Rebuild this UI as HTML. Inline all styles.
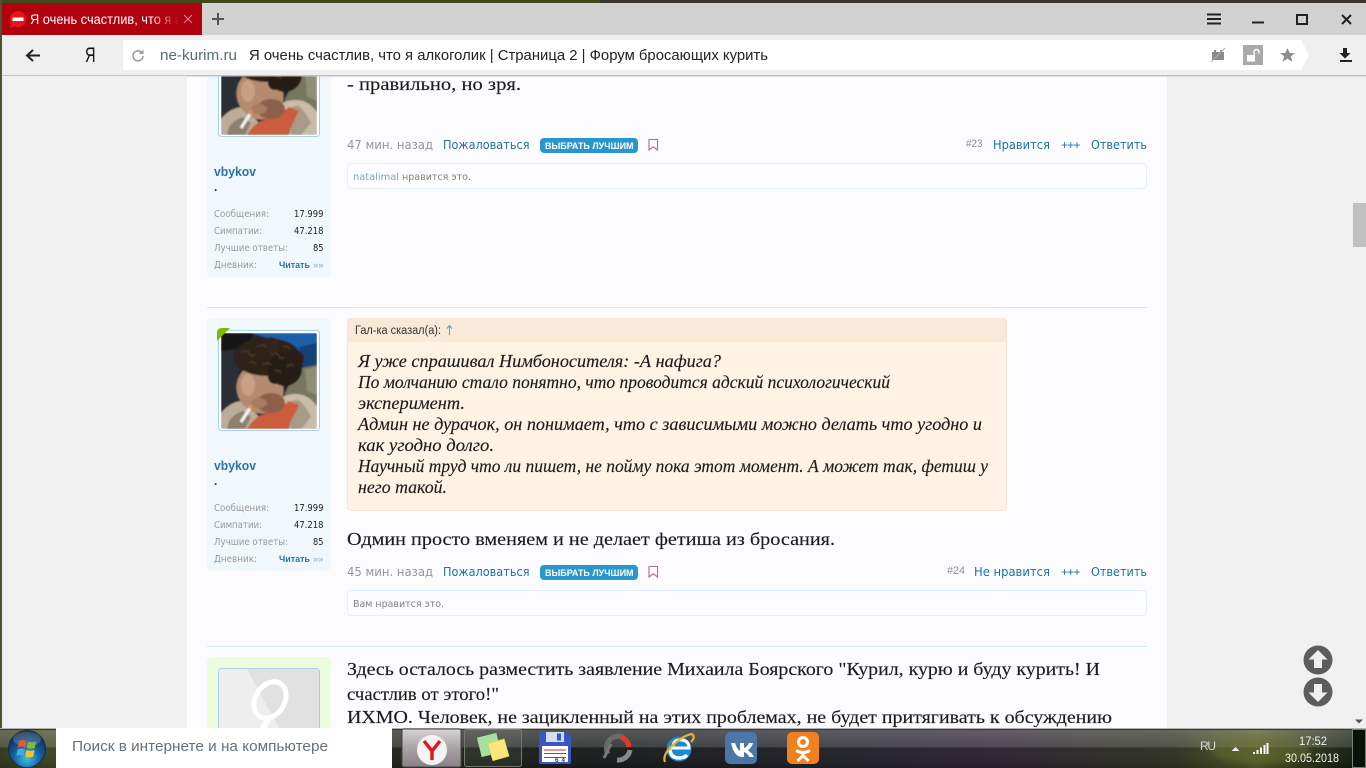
<!DOCTYPE html>
<html lang="ru"><head><meta charset="utf-8"><title>Я очень счастлив, что я алкоголик</title>
<style>
html,body{margin:0;padding:0;width:1366px;height:768px;overflow:hidden;background:#f0f0f0}
svg{display:block}
text{font-family:"Liberation Sans",sans-serif;white-space:pre}
.s{font-family:"Liberation Serif","DejaVu Serif",serif;font-size:18px;fill:#1c1c1c;stroke:#1c1c1c;stroke-width:.15px}
.q{font-style:italic;font-size:18px}
.m,.l,.t,.v,.n{font-family:"DejaVu Sans",sans-serif}
.m{font-size:12px;fill:#959595}
.l{font-size:12px;fill:#1f6ea6}
.t{font-size:9.500px;fill:#9a9a9a}
.v{font-size:9.500px;fill:#222}
.n{font-size:10px;fill:#808080}
</style></head><body>
<svg xmlns="http://www.w3.org/2000/svg" width="1366" height="768" viewBox="0 0 1366 768">
<defs>
<filter id="b" x="-10%" y="-10%" width="120%" height="120%"><feGaussianBlur stdDeviation="0.9"/></filter>
<filter id="b2" x="-20%" y="-20%" width="140%" height="140%"><feGaussianBlur stdDeviation="3"/></filter>
<clipPath id="ac"><rect width="96" height="96" rx="1"/></clipPath>
<symbol id="ava" width="96" height="96" viewBox="0 0 96 96" overflow="hidden">
<g clip-path="url(#ac)"><g filter="url(#b)">
<rect width="96" height="96" fill="#20262e"/>
<polygon points="0,0 32,0 28,16 0,18" fill="#121212"/>
<polygon points="30,0 96,0 96,36 76,22 50,6" fill="#1c60aa"/>
<polygon points="78,14 96,10 96,36 82,34" fill="#143f78"/>
<polygon points="0,18 16,16 18,46 26,66 0,78" fill="#2a2f36"/>
<polygon points="76,36 96,32 96,96 60,96 64,60" fill="#77775f"/>
<polygon points="84,36 96,34 96,62 86,58" fill="#8f8e76"/>
<path d="M0 80q10-12 22-12 8 6 16 16l-10 12H0z" fill="#bbad98"/>
<path d="M52 70q14-12 30-8 10 4 14 12v22H68l4-18z" fill="#c9bca8"/>
<path d="M66 72q6-6 12-5 8 8 12 17l-10 12H70z" fill="#a89a86"/>
<path d="M8 88q6-8 14-10l8 6-6 12H6z" fill="#8d806d"/>
<path d="M26 96q6-10 14-14 16-4 28-14l10 4-12 24z" fill="#cb5c3d"/>
<ellipse cx="39" cy="56" rx="23" ry="25" transform="rotate(-28 39 56)" fill="#b58a6e"/>
<ellipse cx="50" cy="70" rx="14" ry="10" fill="#8d614c"/>
<ellipse cx="27" cy="52" rx="7" ry="11" fill="#c9a084"/>
<ellipse cx="38" cy="70" rx="8" ry="5" fill="#a87a60"/>
<ellipse cx="46" cy="24" rx="34" ry="19" fill="#2d2119"/>
<circle cx="64" cy="36" r="17" fill="#281c15"/>
<circle cx="22" cy="24" r="10" fill="#31231a"/>
<circle cx="74" cy="26" r="9" fill="#2a1e17"/>
<circle cx="50" cy="12" r="8" fill="#33251c"/>
<circle cx="34" cy="12" r="7" fill="#2d2119"/>
<circle cx="38" cy="34" r="7" fill="#2d2119"/>
<circle cx="54" cy="44" r="7" fill="#281c15"/>
<g fill="none" stroke="#4f3b2c" stroke-width="1.300">
<path d="M20 20q4-5 8 0t6 1"/><path d="M36 14q5-4 9 0"/><path d="M50 22q5-4 8 1t5 1"/><path d="M28 30q4-3 7 1"/><path d="M42 32q4-4 8 0"/><path d="M62 14q4-2 7 2"/><path d="M66 34q3-4 7-1"/><path d="M54 38q4-2 6 2"/>
</g>
<line x1="31" y1="72" x2="20" y2="89" stroke="#f4f4f4" stroke-width="3"/>
<line x1="31" y1="72" x2="29" y2="75.500" stroke="#d28a4c" stroke-width="3"/>
</g></g>
</symbol>
<linearGradient id="wall" x1="0" x2="1" y1="0" y2="0">
<stop offset="0" stop-color="#30361c"/><stop offset=".04" stop-color="#3a4420"/><stop offset=".3" stop-color="#1e2218"/><stop offset=".45" stop-color="#16181a"/><stop offset=".6" stop-color="#1e2026"/><stop offset=".72" stop-color="#2a2030"/><stop offset=".86" stop-color="#2c3020"/><stop offset=".92" stop-color="#4c5420"/><stop offset=".96" stop-color="#2c3218"/><stop offset="1" stop-color="#0c120c"/>
</linearGradient>
<linearGradient id="glass" x1="0" x2="0" y1="0" y2="1">
<stop offset="0" stop-color="#fff" stop-opacity=".28"/><stop offset=".47" stop-color="#fff" stop-opacity=".18"/><stop offset=".5" stop-color="#fff" stop-opacity=".03"/><stop offset="1" stop-color="#000" stop-opacity=".1"/>
</linearGradient>
<linearGradient id="fade" x1="0" x2="1" y1="0" y2="0"><stop offset="0" stop-color="#b1000e" stop-opacity="0"/><stop offset="1" stop-color="#b1000e"/></linearGradient>
<radialGradient id="orb" cx=".5" cy=".75" r=".7"><stop offset="0" stop-color="#35c6e8"/><stop offset=".55" stop-color="#145a9a"/><stop offset="1" stop-color="#0c2c50"/></radialGradient>
<linearGradient id="btn" x1="0" x2="0" y1="0" y2="1"><stop offset="0" stop-color="#d8d4d4"/><stop offset=".5" stop-color="#a8a4a6"/><stop offset="1" stop-color="#8a7f88"/></linearGradient>
</defs>

<!-- page -->
<rect width="1366" height="768" fill="#f0f0f0"/>
<rect x="187" y="60" width="980" height="680" fill="#fcfcff"/>

<!-- sidebar 1 -->
<rect x="207" y="40" width="124" height="237" rx="5" fill="#f0f7fd"/>
<rect x="218.500" y="40" width="101" height="96.500" rx="3" fill="#fff" stroke="#a8d0ec"/>
<use href="#ava" x="221" y="39"/>
<text x="214" y="176" font-size="12.500" font-weight="bold" fill="#2e72a4" textLength="42" lengthAdjust="spacingAndGlyphs">vbykov</text>
<text x="214" y="191" font-size="12" font-weight="bold" fill="#222">.</text>
<text class="t" x="214" y="217" textLength="55" lengthAdjust="spacingAndGlyphs">Сообщения:</text><text class="v" x="294" y="217" textLength="29.500" lengthAdjust="spacingAndGlyphs">17.999</text>
<text class="t" x="214" y="234" textLength="48" lengthAdjust="spacingAndGlyphs">Симпатии:</text><text class="v" x="294" y="234" textLength="29.500" lengthAdjust="spacingAndGlyphs">47.218</text>
<text class="t" x="214" y="251" textLength="74" lengthAdjust="spacingAndGlyphs">Лучшие ответы:</text><text class="v" x="313" y="251" textLength="10.500" lengthAdjust="spacingAndGlyphs">85</text>
<text class="t" x="214" y="268" textLength="43" lengthAdjust="spacingAndGlyphs">Дневник:</text><text x="279" y="268" font-size="9.500" font-weight="bold" fill="#2e72a4" textLength="31" lengthAdjust="spacingAndGlyphs">Читать</text><text x="313" y="268" font-size="9.500" fill="#8aa8c0" textLength="10.500" lengthAdjust="spacingAndGlyphs">»»</text>

<!-- post 23 -->
<text class="s" x="347" y="90" textLength="174" lengthAdjust="spacingAndGlyphs">- правильно, но зря.</text>
<text class="m" x="347" y="149" textLength="86" lengthAdjust="spacingAndGlyphs">47 мин. назад</text>
<text class="l" x="443" y="149" textLength="86.500" lengthAdjust="spacingAndGlyphs">Пожаловаться</text>
<rect x="540" y="138" width="98" height="15" rx="4" fill="#2a96d0"/>
<text x="545" y="149" font-size="9.500" font-weight="bold" fill="#fff" textLength="88.500" lengthAdjust="spacingAndGlyphs">ВЫБРАТЬ ЛУЧШИМ</text>
<path d="M649 139.500h8.500v10.500l-4.250-3.200-4.250 3.200z" fill="none" stroke="#b96a80" stroke-width="1.100"/>
<text x="966" y="147" font-size="11" fill="#8d8d8d" textLength="16.500" lengthAdjust="spacingAndGlyphs">#23</text>
<text class="l" x="993" y="149" textLength="57" lengthAdjust="spacingAndGlyphs">Нравится</text>
<text x="1061" y="149" font-size="12" fill="#1f6ea6" textLength="19.500">+++</text>
<text class="l" x="1091" y="149" textLength="56" lengthAdjust="spacingAndGlyphs">Ответить</text>
<rect x="347.500" y="163.500" width="799" height="25" rx="3.500" fill="#fdfdff" stroke="#e3f0fb"/>
<text class="n" x="353" y="180" style="fill:#7ba2bd" textLength="46" lengthAdjust="spacingAndGlyphs">natalimal</text>
<text class="n" x="402" y="180" textLength="69" lengthAdjust="spacingAndGlyphs">нравится это.</text>

<line x1="207" x2="1147" y1="307.500" y2="307.500" stroke="#e2e8e2"/>

<!-- sidebar 2 -->
<rect x="207" y="318" width="124" height="253" rx="5" fill="#f0f7fd"/>
<rect x="218.500" y="330.500" width="101" height="100" rx="3" fill="#fff" stroke="#a8d0ec"/>
<use href="#ava" x="221" y="333"/>
<path d="M217 333q0-5 5-5h8l-13 13z" fill="#80b800"/>
<text x="214" y="470" font-size="12.500" font-weight="bold" fill="#2e72a4" textLength="42" lengthAdjust="spacingAndGlyphs">vbykov</text>
<text x="214" y="485" font-size="12" font-weight="bold" fill="#222">.</text>
<text class="t" x="214" y="511" textLength="55" lengthAdjust="spacingAndGlyphs">Сообщения:</text><text class="v" x="294" y="511" textLength="29.500" lengthAdjust="spacingAndGlyphs">17.999</text>
<text class="t" x="214" y="528" textLength="48" lengthAdjust="spacingAndGlyphs">Симпатии:</text><text class="v" x="294" y="528" textLength="29.500" lengthAdjust="spacingAndGlyphs">47.218</text>
<text class="t" x="214" y="545" textLength="74" lengthAdjust="spacingAndGlyphs">Лучшие ответы:</text><text class="v" x="313" y="545" textLength="10.500" lengthAdjust="spacingAndGlyphs">85</text>
<text class="t" x="214" y="562" textLength="43" lengthAdjust="spacingAndGlyphs">Дневник:</text><text x="279" y="562" font-size="9.500" font-weight="bold" fill="#2e72a4" textLength="31" lengthAdjust="spacingAndGlyphs">Читать</text><text x="313" y="562" font-size="9.500" fill="#8aa8c0" textLength="10.500" lengthAdjust="spacingAndGlyphs">»»</text>

<!-- quote -->
<rect x="347" y="318" width="660" height="193" rx="4" fill="#fff3e5" stroke="none"/>
<path d="M347 342v-20a4 4 0 0 1 4-4h652a4 4 0 0 1 4 4v20z" fill="#f8e9d8"/>
<rect x="347.500" y="318.500" width="659" height="192" rx="4" fill="none" stroke="#f6e6d2"/>
<text x="355" y="334" font-size="11.500" fill="#333" textLength="86" lengthAdjust="spacingAndGlyphs">Гал-ка сказал(а):</text>
<path d="M449.500 335v-9M447 328.500l2.500-3 2.500 3" fill="none" stroke="#5c9ccb" stroke-width="1"/>
<text class="s q" x="358" y="367" textLength="363" lengthAdjust="spacingAndGlyphs">Я уже спрашивал Нимбоносителя: -А нафига?</text>
<text class="s q" x="358" y="388" textLength="532" lengthAdjust="spacingAndGlyphs">По молчанию стало понятно, что проводится адский психологический</text>
<text class="s q" x="358" y="409" textLength="107" lengthAdjust="spacingAndGlyphs">эксперимент.</text>
<text class="s q" x="358" y="430" textLength="624" lengthAdjust="spacingAndGlyphs">Админ не дурачок, он понимает, что с зависимыми можно делать что угодно и</text>
<text class="s q" x="358" y="451" textLength="136" lengthAdjust="spacingAndGlyphs">как угодно долго.</text>
<text class="s q" x="358" y="472" textLength="630" lengthAdjust="spacingAndGlyphs">Научный труд что ли пишет, не пойму пока этот момент. А может так, фетиш у</text>
<text class="s q" x="358" y="493" textLength="89" lengthAdjust="spacingAndGlyphs">него такой.</text>

<text class="s" x="347" y="545" textLength="488" lengthAdjust="spacingAndGlyphs">Одмин просто вменяем и не делает фетиша из бросания.</text>
<text class="m" x="347" y="576" textLength="86" lengthAdjust="spacingAndGlyphs">45 мин. назад</text>
<text class="l" x="443" y="576" textLength="86.500" lengthAdjust="spacingAndGlyphs">Пожаловаться</text>
<rect x="540" y="565" width="98" height="15" rx="4" fill="#2a96d0"/>
<text x="545" y="576" font-size="9.500" font-weight="bold" fill="#fff" textLength="88.500" lengthAdjust="spacingAndGlyphs">ВЫБРАТЬ ЛУЧШИМ</text>
<path d="M649 566.500h8.500v10.500l-4.250-3.200-4.250 3.200z" fill="none" stroke="#b96a80" stroke-width="1.100"/>
<text x="947" y="574" font-size="11" fill="#8d8d8d" textLength="18" lengthAdjust="spacingAndGlyphs">#24</text>
<text class="l" x="974" y="576" textLength="76" lengthAdjust="spacingAndGlyphs">Не нравится</text>
<text x="1061" y="576" font-size="12" fill="#1f6ea6" textLength="19.500">+++</text>
<text class="l" x="1091" y="576" textLength="56" lengthAdjust="spacingAndGlyphs">Ответить</text>
<rect x="347.500" y="590.500" width="799" height="25" rx="3.500" fill="#fdfdff" stroke="#e3f0fb"/>
<text class="n" x="353" y="607" textLength="91" lengthAdjust="spacingAndGlyphs">Вам нравится это.</text>

<line x1="207" x2="1147" y1="646.500" y2="646.500" stroke="#d2ebf8"/>

<!-- post 3 -->
<rect x="207" y="657" width="124" height="90" rx="5" fill="#ebfddc"/>
<rect x="218.500" y="668.500" width="101" height="80" rx="3" fill="#eeeeee" stroke="#a8d0ec"/>
<polygon points="247,669 319,669 319,748 290,748" fill="#e1e1e1"/>
<ellipse cx="270" cy="700" rx="14.500" ry="19.500" transform="rotate(32 270 700)" fill="none" stroke="#fff" stroke-width="5"/>
<path d="M268 718l-5 11" stroke="#fff" stroke-width="6" fill="none"/>
<text class="s" x="347" y="675" textLength="753" lengthAdjust="spacingAndGlyphs">Здесь осталось разместить заявление Михаила Боярского "Курил, курю и буду курить! И</text>
<text class="s" x="347" y="700" textLength="152" lengthAdjust="spacingAndGlyphs">счастлив от этого!"</text>
<text class="s" x="347" y="723" textLength="765" lengthAdjust="spacingAndGlyphs">ИХМО. Человек, не зацикленный на этих проблемах, не будет притягивать к обсуждению</text>

<!-- scroll -->
<rect x="1353" y="203" width="13" height="44" fill="#c0c0c0"/>
<path d="M1355 719.500h8l-4 4z" fill="#555"/>
<circle cx="1318" cy="660" r="14.500" fill="#5d5d5d"/>
<path d="M1318 650l9.500 9.500h-5.500v8.500h-8v-8.500h-5.500z" fill="#f0f0f0"/>
<circle cx="1318" cy="692" r="14.500" fill="#5d5d5d"/>
<path d="M1318 702l9.500-9.500h-5.500v-8.500h-8v8.500h-5.500z" fill="#f0f0f0"/>

<!-- browser chrome -->
<rect x="0" y="0" width="1366" height="3" fill="#3e4a1c"/>
<rect x="600" y="0" width="766" height="3" fill="#3a3430"/>
<rect x="0" y="3" width="1366" height="32" fill="#d2d2d2"/>
<rect x="0" y="35" width="1366" height="40" fill="#efefef"/>
<rect x="0" y="75" width="1366" height="1.500" fill="#c2c2c2"/>
<rect x="0" y="0" width="2" height="728" fill="#4a5430"/>
<rect x="2" y="76" width="185" height="652" fill="#f0f0f0"/>
<rect x="2" y="3" width="200" height="32" fill="#b1000e"/>
<circle cx="18" cy="19" r="8" fill="#e8141c"/>
<path d="M11 24l-1 4 5-2z" fill="#e8141c"/>
<rect x="12.500" y="17.500" width="11" height="3.500" fill="#fff"/>
<text x="30" y="24" font-size="13.500" fill="#fff" textLength="152" lengthAdjust="spacingAndGlyphs">Я очень счастлив, что я а</text>
<rect x="150" y="3" width="30" height="32" fill="url(#fade)"/>
<rect x="180" y="3" width="22" height="32" fill="#b1000e"/>
<path d="M184 15l8 8M192 15l-8 8" stroke="#d98a90" stroke-width="1.100"/>
<path d="M218 13v12M212 19h12" stroke="#555" stroke-width="2"/>
<!-- window buttons -->
<path d="M1207 14.500h14M1207 19h14M1207 23.500h14" stroke="#222" stroke-width="2"/>
<rect x="1252" y="21.500" width="12" height="2" fill="#222"/>
<rect x="1297" y="15" width="10" height="9" fill="none" stroke="#222" stroke-width="2"/>
<path d="M1342 15l9 9M1351 15l-9 9" stroke="#222" stroke-width="2"/>
<!-- toolbar -->
<path d="M27 55.500h13M33 50l-6 5.500 6 5.500" fill="none" stroke="#222" stroke-width="2"/>
<text x="85" y="62" font-size="21" fill="#111" textLength="10.500" lengthAdjust="spacingAndGlyphs">Я</text>
<path d="M123 42a2 2 0 0 1 2-2H1301l8 15-8 15H125a2 2 0 0 1-2-2z" fill="#fff"/>
<path d="M143 56a5 5 0 1 1-1.300-3.500" fill="none" stroke="#999" stroke-width="1.500"/>
<path d="M143.500 49.500v4.500h-4.500z" fill="#999"/>
<text x="160" y="60" font-size="14.500" fill="#5b6b72" textLength="77" lengthAdjust="spacingAndGlyphs">ne-kurim.ru</text>
<text x="249" y="60" font-size="14.500" fill="#222" textLength="519" lengthAdjust="spacingAndGlyphs">Я очень счастлив, что я алкоголик | Страница 2 | Форум бросающих курить</text>
<!-- right icons -->
<rect x="1212" y="52" width="12" height="8" fill="#8a8a8a"/>
<path d="M1214 52v-2h2v2M1220 52v-2h2v2" fill="#8a8a8a"/>
<path d="M1211 62l14-14" stroke="#aaa" stroke-width="1"/>
<rect x="1243" y="45" width="20" height="20" fill="#a9a9a9"/>
<rect x="1247" y="55" width="8" height="6.500" fill="#fff"/>
<path d="M1254 55v-3a2.500 2.500 0 0 1 5 0v1.500" fill="none" stroke="#fff" stroke-width="1.400"/>
<path d="M1287.500 48l2.300 5h5.200l-4.200 3.400 1.600 5.300-4.900-3-4.900 3 1.600-5.300-4.200-3.400h5.200z" fill="#8e8e8e"/>
<path d="M1343 48h4v5h3.500l-5.500 5.500-5.500-5.500h3.500z" fill="#222"/>
<rect x="1340" y="60" width="12" height="2" fill="#222"/>

<!-- taskbar -->
<rect x="0" y="728" width="1366" height="40" fill="url(#wall)"/>
<rect x="0" y="728" width="1366" height="40" fill="url(#glass)"/>
<ellipse cx="1260" cy="750" rx="50" ry="14" fill="#6a7030" opacity=".45" filter="url(#b2)"/>
<rect x="0" y="728" width="1366" height="1" fill="#b4b4b0"/>
<rect x="0" y="729" width="1366" height="1" fill="#33352e"/>
<!-- start orb -->
<circle cx="27" cy="749" r="18.500" fill="url(#orb)" stroke="#1c2c3c"/>
<ellipse cx="27" cy="739" rx="14" ry="7.500" fill="#fff" opacity=".18"/>
<path d="M19 741q4-2 7.500 0l-1.200 6.500q-4-2-7.500 0z" fill="#e8562a"/>
<path d="M28 741.500q4 1.500 8 0l-1.200 6.500q-4 1.500-8 0z" fill="#82bc3c"/>
<path d="M17.500 749.500q4-2 7.500 0l-1.200 6.500q-4-2-7.500 0z" fill="#48a8e0"/>
<path d="M26.500 750q4 1.500 8 0l-1.200 6.500q-4 1.500-8 0z" fill="#f5c42c"/>
<!-- search -->
<rect x="56" y="728" width="336" height="40" fill="#fff"/>
<text x="72" y="751" font-size="15" fill="#66707a" textLength="256" lengthAdjust="spacingAndGlyphs">Поиск в интернете и на компьютере</text>
<!-- yandex -->
<rect x="402" y="729" width="59" height="38" rx="2" fill="url(#btn)" stroke="#444"/>
<circle cx="432" cy="750" r="15" fill="#f5f2f2"/>
<path d="M424 741l8 10 8-10M432 751v9" fill="none" stroke="#e0141c" stroke-width="3.400"/>
<!-- notes -->
<rect x="464.500" y="729.500" width="57" height="37" rx="2" fill="#fff" fill-opacity=".06" stroke="#77786f"/>
<rect x="479" y="735" width="20" height="20" transform="rotate(-14 489 745)" fill="#a6dfa0"/>
<rect x="490" y="741" width="17" height="18" transform="rotate(-16 498 750)" fill="#fbe67a" stroke="#e4c84c" stroke-width=".5"/>
<!-- floppy -->
<path d="M539 734a2 2 0 0 1 2-2h25l5 5v25a2 2 0 0 1-2 2h-28a2 2 0 0 1-2-2z" fill="#3a55c4"/>
<rect x="546" y="732" width="18" height="10" fill="#d4dcf2"/>
<rect x="557" y="733.500" width="4" height="7" fill="#3a55c4"/>
<rect x="542" y="746" width="26" height="16" fill="#fff"/>
<path d="M544 750h22M544 753.500h22" stroke="#c03040" stroke-width="1"/>
<rect x="544" y="757" width="22" height="1" fill="#c03040"/>
<text x="555" y="762" font-size="6.500" font-weight="bold" fill="#444" textLength="10">64</text>
<!-- recent -->
<path d="M608 754a12 12 0 0 1 15-17" fill="none" stroke="#6a6a6a" stroke-width="5"/>
<path d="M621 737a12 12 0 0 1 8 10" fill="none" stroke="#e03a28" stroke-width="5"/>
<path d="M630 750a12 12 0 0 1-13 10" fill="none" stroke="#8a8a8a" stroke-width="5"/>
<path d="M604 758l7-14" stroke="#777" stroke-width="3"/>
<!-- IE -->
<circle cx="679" cy="749" r="12.500" fill="#1c8ad0"/>
<path d="M669 748h20q0-7-7-8-8-1-9 6" fill="none" stroke="#fff" stroke-width="3"/>
<path d="M670 750q1 8 9 8 5 0 8-3" fill="none" stroke="#fff" stroke-width="3.500"/>
<path d="M665 762q-3-7 8-17t19-11q4 3-1 8" fill="none" stroke="#e8b030" stroke-width="2.200"/>
<!-- VK -->
<rect x="725" y="732" width="32" height="32" rx="5" fill="#4a76a8"/>
<path d="M731 743h4q2 6 5 8v-8h4v5q3-1 5-5h4q-1 4-5 7.500 4 2.500 6 6.500h-4.500q-2-3.500-5.500-5v5h-2q-8 0-11-14.500z" fill="#fff"/>
<!-- OK -->
<rect x="787" y="732" width="32" height="32" rx="5" fill="#f2801e"/>
<circle cx="803" cy="742" r="4.500" fill="none" stroke="#fff" stroke-width="3"/>
<path d="M796 750.500q7 4 14 0M803 753v3M803 755.500l-5.500 5.500M803 755.500l5.500 5.500" fill="none" stroke="#fff" stroke-width="3"/>
<!-- tray -->
<text x="1200" y="750" font-size="12" fill="#d8d8d8" textLength="16">RU</text>
<path d="M1231.500 751l4-4 4 4z" fill="#eee"/>
<path d="M1253 752h2v2h-2zM1256.500 750h2v4h-2zM1260 747.500h2v6.500h-2zM1263.500 745h2v9h-2zM1266.500 743h2v11h-2z" fill="#fff"/>
<text x="1299" y="745" font-size="12" fill="#f0f0f0" textLength="28" lengthAdjust="spacingAndGlyphs">17:52</text>
<text x="1285" y="762" font-size="12" fill="#f0f0f0" textLength="54" lengthAdjust="spacingAndGlyphs">30.05.2018</text>
<rect x="1352.500" y="729.500" width="13" height="38" fill="#0a120a" stroke="#7a7f78"/>
</svg>
</body></html>
